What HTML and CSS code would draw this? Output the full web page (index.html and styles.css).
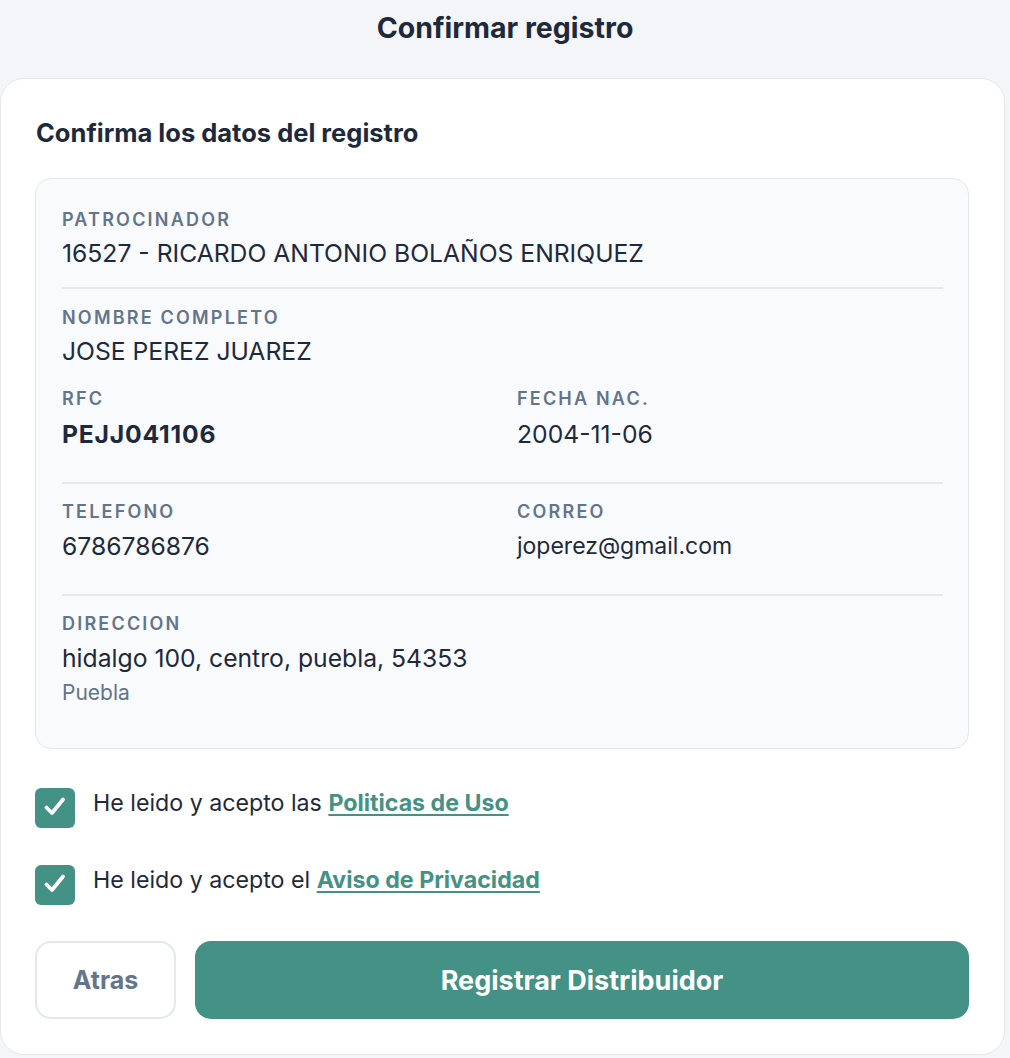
FILE: index.html
```html
<!DOCTYPE html>
<html lang="es">
<head>
<meta charset="utf-8">
<title>Confirmar registro</title>
<link rel="stylesheet" href="styles.css">
</head>
<body>
<header class="topbar">
  <h1 class="page-title">Confirmar registro</h1>
</header>
<main class="card">
  <h2 class="card-title">Confirma los datos del registro</h2>
  <section class="summary">
    <div class="sec sec-first">
      <div class="label">PATROCINADOR</div>
      <div class="value">16527 - RICARDO ANTONIO BOLAÑOS ENRIQUEZ</div>
    </div>
    <div class="sec sec-name">
      <div class="label">NOMBRE COMPLETO</div>
      <div class="value">JOSE PEREZ JUAREZ</div>
      <div class="grid2 grid-rfc">
        <div>
          <div class="label">RFC</div>
          <div class="value value-row value-bold">PEJJ041106</div>
        </div>
        <div>
          <div class="label">FECHA NAC.</div>
          <div class="value value-row">2004-11-06</div>
        </div>
      </div>
    </div>
    <div class="sec sec-contact">
      <div class="grid2">
        <div>
          <div class="label">TELEFONO</div>
          <div class="value value-c">6786786876</div>
        </div>
        <div>
          <div class="label">CORREO</div>
          <div class="value value-c value-sm">joperez@gmail.com</div>
        </div>
      </div>
    </div>
    <div class="sec sec-last">
      <div class="label">DIRECCION</div>
      <div class="value value-c">hidalgo 100, centro, puebla, 54353</div>
      <div class="sub">Puebla</div>
    </div>
  </section>

  <div class="checks">
    <label class="check-row">
      <span class="checkbox">
        <svg viewBox="0 0 40 40" width="40" height="40"><path d="M11.5 19.5L17 25L28 11.5" fill="none" stroke="#fff" stroke-width="3.8" stroke-linecap="round" stroke-linejoin="round"/></svg>
      </span>
      <span class="check-text">He leido y acepto las <a href="#" class="link">Politicas de Uso</a></span>
    </label>
    <label class="check-row">
      <span class="checkbox">
        <svg viewBox="0 0 40 40" width="40" height="40"><path d="M11.5 19.5L17 25L28 11.5" fill="none" stroke="#fff" stroke-width="3.8" stroke-linecap="round" stroke-linejoin="round"/></svg>
      </span>
      <span class="check-text">He leido y acepto el <a href="#" class="link">Aviso de Privacidad</a></span>
    </label>
  </div>

  <div class="actions">
    <button class="btn btn-back" type="button">Atras</button>
    <button class="btn btn-primary" type="button">Registrar Distribuidor</button>
  </div>
</main>
</body>
</html>
```

FILE: styles.css
```css
* { box-sizing: border-box; }

html, body {
  margin: 0;
  padding: 0;
}

body {
  background: #f4f5f8;
  font-family: Inter, "Noto Sans", "Liberation Sans", sans-serif;
  color: #1e293b;
  width: 1010px;
}

.topbar {
  height: 78px;
  display: flex;
  justify-content: center;
  padding-top: 10px;
}

.page-title {
  margin: 0;
  font-size: 28.5px;
  line-height: 36px;
  font-weight: 700;
  color: #1e293b;
}

.card {
  width: 1005px;
  background: #ffffff;
  border: 1px solid #e5e7eb;
  border-radius: 24px;
  padding: 37px 35px 35px 34px;
  display: flex;
  flex-direction: column;
}

.card-title {
  margin: 0 0 28px 1px;
  font-size: 25.5px;
  line-height: 34px;
  font-weight: 700;
  color: #1e293b;
}

.summary {
  width: 934px;
  background: #f8fafc;
  border: 1px solid #e2e8f0;
  border-radius: 16px;
  padding: 0 25px 0 26px;
}

.sec {
  border-bottom: 2px solid #e2e8f0;
}

.sec-first { padding: 30px 0 18px 0; }
.sec-name { padding: 18px 0 32px 0; }
.sec-contact { padding: 17px 0 32px 0; }
.sec-last { border-bottom: none; padding: 17px 0 42px 0; }

.label {
  font-size: 18px;
  line-height: 22px;
  font-weight: 600;
  letter-spacing: 2.2px;
  color: #64748b;
}

.value {
  margin-top: 6px;
  font-size: 24.7px;
  line-height: 32px;
  color: #1e293b;
}

.value-row { margin-top: 8px; }
.value-c { margin-top: 7px; }
.value-bold { font-weight: 700; letter-spacing: 0.8px; }
.value-sm { font-size: 23px; }

.sub {
  margin-top: 6px;
  font-size: 21px;
  line-height: 26px;
  color: #64748b;
}

.grid2 {
  display: grid;
  grid-template-columns: 1fr 1fr;
  column-gap: 29px;
}

.grid-rfc { margin-top: 21px; }

.checks {
  margin-top: 39px;
  display: flex;
  flex-direction: column;
  gap: 37px;
}

.check-row {
  display: flex;
  align-items: flex-start;
  gap: 18px;
}

.checkbox {
  width: 40px;
  height: 40px;
  flex: 0 0 40px;
  border-radius: 6px;
  background: #439285;
  display: flex;
  align-items: center;
  justify-content: center;
}

.checkbox svg { display: block; }

.check-text {
  font-size: 23.2px;
  line-height: 30px;
  color: #1e293b;
}

.link {
  color: #439285;
  font-weight: 700;
  text-decoration: underline;
  text-underline-offset: 3px;
  text-decoration-thickness: 2px;
}

.actions {
  margin-top: 36px;
  display: flex;
  gap: 19px;
}

.btn {
  font-family: Inter, "Noto Sans", "Liberation Sans", sans-serif;
  height: 78px;
  border-radius: 16px;
  font-weight: 700;
  cursor: pointer;
}

.btn-back {
  width: 141px;
  background: #ffffff;
  border: 2px solid #e2e8f0;
  color: #64748b;
  font-size: 25px;
}

.btn-primary {
  flex: 1;
  background: #439285;
  border: none;
  color: #ffffff;
  font-size: 27px;
}
```
